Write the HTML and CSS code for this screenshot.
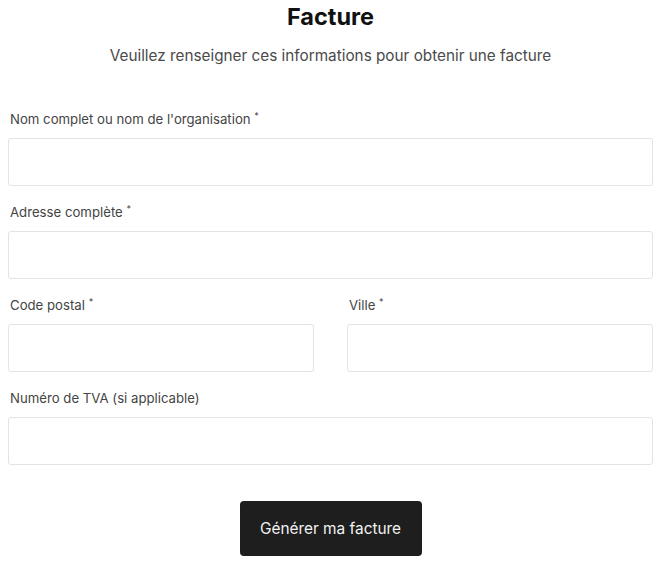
FILE: index.html
```html
<!DOCTYPE html>
<html lang="fr">
<head>
<meta charset="utf-8">
<title>Facture</title>
<link rel="stylesheet" href="styles.css">
</head>
<body>
<form class="invoice">
  <h1 class="title">Facture</h1>
  <p class="subtitle">Veuillez renseigner ces informations pour obtenir une facture</p>
  <div class="fields">
    <div class="field">
      <label class="label">Nom complet ou nom de l'organisation <sup class="req">*</sup></label>
      <input class="input" type="text">
    </div>
    <div class="field">
      <label class="label">Adresse complète <sup class="req">*</sup></label>
      <input class="input" type="text">
    </div>
    <div class="row">
      <div class="field">
        <label class="label">Code postal <sup class="req">*</sup></label>
        <input class="input" type="text">
      </div>
      <div class="field">
        <label class="label">Ville <sup class="req">*</sup></label>
        <input class="input" type="text">
      </div>
    </div>
    <div class="field">
      <label class="label">Numéro de TVA (si applicable)</label>
      <input class="input" type="text">
    </div>
  </div>
  <div class="actions">
    <button class="btn" type="button">Générer ma facture</button>
  </div>
</form>
</body>
</html>
```
FILE: styles.css
```css
html, body {
  background: #ffffff;
}
body {
  margin: 0;
  padding: 4px 9px 0 8px;
  font-family: Inter, "Noto Sans", sans-serif;
  color: #1a1a1a;
}
.invoice {
  display: flex;
  flex-direction: column;
}
.title {
  margin: 0;
  font-size: 23.5px;
  line-height: 26px;
  font-weight: 700;
  text-align: center;
  color: #111;
}
.subtitle {
  margin: 16px 0 0 0;
  font-size: 15.3px;
  line-height: 20px;
  text-align: center;
  color: #4a4a4a;
}
.fields {
  margin-top: 44px;
  display: flex;
  flex-direction: column;
  gap: 17px;
}
.row {
  display: grid;
  grid-template-columns: 1fr 1fr;
  column-gap: 33px;
}
.field {
  display: flex;
  flex-direction: column;
  gap: 10px;
}
.label {
  font-size: 13.2px;
  line-height: 18px;
  color: #444;
  padding-left: 2px;
}
.req {
  font-size: 9px;
  line-height: 0;
  vertical-align: 5px;
}
.input {
  box-sizing: border-box;
  height: 48px;
  width: 100%;
  margin: 0;
  border: 1px solid #e3e3e3;
  border-radius: 3px;
  background: #fff;
  font: inherit;
}
.actions {
  display: flex;
  justify-content: center;
  margin-top: 36px;
}
.btn {
  width: 182px;
  height: 55px;
  border: none;
  border-radius: 4px;
  background: #1e1e1e;
  color: #f2f2f2;
  font-family: Inter, "Noto Sans", sans-serif;
  font-size: 15.4px;
}
```
